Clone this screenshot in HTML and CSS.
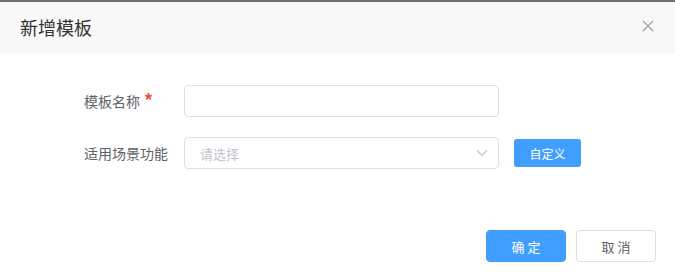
FILE: index.html
```html
<!DOCTYPE html>
<html lang="zh">
<head>
<meta charset="utf-8">
<link rel="stylesheet" href="styles.css">
</head>
<body>
<div class="dialog">
  <div class="header">
    <span class="title">新增模板</span>
    <svg class="close" width="12" height="12" viewBox="0 0 12 12"><path d="M1 1 L11 11 M11 1 L1 11" stroke="#a0a0a0" stroke-width="1.2" fill="none"/></svg>
  </div>
  <div class="body">
    <div class="row">
      <label class="label">模板名称<span class="req">*</span></label>
      <div class="input"></div>
    </div>
    <div class="row">
      <label class="label">适用场景功能</label>
      <div class="input select">
        <span class="placeholder">请选择</span>
        <svg class="chev" width="12" height="8" viewBox="0 0 12 8"><path d="M1 1.5 L6 6.5 L11 1.5" stroke="#c0c4cc" stroke-width="1.1" fill="none"/></svg>
      </div>
      <button class="btn-custom">自定义</button>
    </div>
  </div>
  <div class="footer">
    <button class="btn primary">确 定</button>
    <button class="btn">取 消</button>
  </div>
</div>
</body>
</html>
```
FILE: styles.css
```css
* { box-sizing: border-box; }
html, body { margin: 0; padding: 0; background: #fff; }
body {
  font-family: "Noto Sans CJK SC", "Liberation Sans", sans-serif;
  width: 675px;
  height: 280px;
  overflow: hidden;
  border-top: 2px solid #6f6f6f;
}
.dialog { width: 675px; }
.header {
  height: 52px;
  background: #f8f8f8;
  display: flex;
  align-items: center;
  justify-content: space-between;
  padding: 0 20px 0 20px;
}
.title { font-size: 18px; color: #333; line-height: 24px; margin-top: -2px; }
.close { margin-right: 1px; margin-top: -4px; }
.body {
  padding: 31px 0 0 84px;
  display: flex;
  flex-direction: column;
  gap: 20px;
}
.row { display: flex; align-items: center; height: 32px; }
.label {
  width: 100px;
  font-size: 14px;
  color: #606266;
  line-height: 20px;
}
.req {
  color: #f04a4a;
  margin-left: 5px;
  font-family: "Liberation Sans", sans-serif;
  font-size: 18px;
  font-weight: bold;
  position: relative;
  top: -1px;
  line-height: 1;
}
.input {
  width: 315px;
  height: 32px;
  border: 1px solid #dcdfe6;
  border-radius: 4px;
  background: #fff;
}
.select {
  display: flex;
  align-items: center;
  justify-content: space-between;
  padding: 0 10px 0 15px;
}
.placeholder { font-size: 13px; color: #c0c4cc; }
.btn-custom {
  margin-left: 15px;
  width: 67px;
  height: 28px;
  background: #409eff;
  border: none;
  border-radius: 3px;
  color: #fff;
  font-family: inherit;
  font-size: 12px;
  padding: 0;
}
.footer {
  display: flex;
  justify-content: flex-end;
  gap: 10px;
  padding: 61px 19px 0 0;
}
.btn {
  width: 80px;
  height: 32px;
  border: 1px solid #dcdfe6;
  border-radius: 4px;
  background: #fff;
  color: #606266;
  font-family: inherit;
  font-size: 13px;
  padding: 0;
}
.btn.primary { background: #409eff; border-color: #409eff; color: #fff; }
```
